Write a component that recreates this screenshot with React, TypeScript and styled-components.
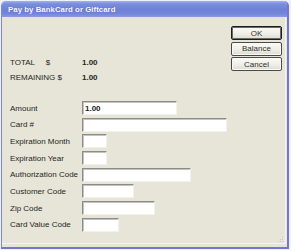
import React from "react";
import styled, { createGlobalStyle } from "styled-components";

const Global = createGlobalStyle`
  html, body { margin: 0; padding: 0; background: #eef0fa; }
  body { font-family: "Liberation Sans", Arial, sans-serif; }
  * { box-sizing: border-box; }
`;

const Window = styled.div`
  position: relative;
  margin: 1px 0 0 1px;
  width: 288px;
  height: 248px;
  display: flex;
  flex-direction: column;
  background: #e6e5d7;
  border-left: 1px solid #7c88d8;
  border-right: 2px solid #7378cc;
  border-bottom: 2px solid #7378cc;
  border-radius: 5px 5px 0 0;
  overflow: hidden;
`;

const TitleBar = styled.div`
  height: 16px;
  flex: none;
  display: flex;
  align-items: center;
  padding-left: 6px;
  background: linear-gradient(
    to bottom,
    #a2b0ec 0%,
    #7a8edc 18%,
    #6d82d6 55%,
    #7386da 80%,
    #8c98e6 100%
  );
  color: #fbfbff;
  font-size: 7.8px;
  font-weight: bold;
  text-shadow: 0 0 1px rgba(40, 50, 120, 0.6);
  letter-spacing: 0.05px;
`;

const Body = styled.div`
  flex: 1;
  display: flex;
  margin: 0 1px 3px 0;
  border-right: 1px solid #f4f4ee;
  border-bottom: 1px solid #f4f4ee;
`;

const Main = styled.div`
  flex: 1;
  padding: 38px 0 0 8px;
  display: flex;
  flex-direction: column;
`;

const Summary = styled.div`
  display: grid;
  grid-template-columns: 72px auto;
  grid-auto-rows: 15px;
  align-items: center;
  margin-bottom: 16px;
`;

const Text = styled.span<{ $bold?: boolean }>`
  font-size: 8px;
  color: #262626;
  font-weight: ${(p) => (p.$bold ? "bold" : "normal")};
  white-space: pre;
`;

const Form = styled.div`
  display: grid;
  grid-template-columns: 72px auto;
  grid-auto-rows: 14px;
  row-gap: 2.7px;
  align-items: center;
`;

const Field = styled.div<{ $w: number }>`
  width: ${(p) => p.$w}px;
  height: 14px;
  background: #ffffff;
  border-top: 1px solid #8c8c88;
  border-left: 1px solid #8c8c88;
  border-right: 1px solid #f2f2ea;
  border-bottom: 1px solid #f2f2ea;
  box-shadow: inset 1px 1px 0 #c4c3bc;
  display: flex;
  align-items: center;
  padding-left: 2px;
  font-size: 8px;
  font-weight: bold;
  color: #1a1a1a;
`;

const Side = styled.div`
  width: 55px;
  padding: 9px 3px 0 1px;
  display: flex;
  flex-direction: column;
  gap: 1.7px;
`;

const Button = styled.div<{ $default?: boolean }>`
  width: 51px;
  height: 14px;
  display: flex;
  align-items: center;
  justify-content: center;
  font-size: 8px;
  color: #303030;
  border-radius: 2px;
  border: 1px solid ${(p) => (p.$default ? "#1c1c1c" : "#4a4a4a")};
  box-shadow: ${(p) =>
    p.$default
      ? "inset 0 0 0 1px #6a6a6a"
      : "inset 0 0 0 1px #fbfbf6"};
  background: linear-gradient(to bottom, #fbfbf7 0%, #eeede5 60%, #dcdbd0 100%);
`;

const Grip = styled.svg`
  position: absolute;
  right: 3px;
  bottom: 4px;
`;

const fields: { label: string; w: number; value?: string }[] = [
  { label: "Amount", w: 95, value: "1.00" },
  { label: "Card #", w: 145 },
  { label: "Expiration Month", w: 25 },
  { label: "Expiration Year", w: 25 },
  { label: "Authorization Code", w: 109 },
  { label: "Customer Code", w: 52 },
  { label: "Zip Code", w: 73 },
  { label: "Card Value Code", w: 37 },
];

export default function App() {
  return (
    <>
      <Global />
      <Window>
        <TitleBar>Pay by BankCard or Giftcard</TitleBar>
        <Body>
          <Main>
            <Summary>
              <Text>{"TOTAL     $"}</Text>
              <Text $bold>1.00</Text>
              <Text>REMAINING $</Text>
              <Text $bold>1.00</Text>
            </Summary>
            <Form>
              {fields.map((f) => (
                <React.Fragment key={f.label}>
                  <Text>{f.label}</Text>
                  <Field $w={f.w}>{f.value ?? ""}</Field>
                </React.Fragment>
              ))}
            </Form>
          </Main>
          <Side>
            <Button $default>OK</Button>
            <Button>Balance</Button>
            <Button>Cancel</Button>
          </Side>
        </Body>
        <Grip width="7" height="7" viewBox="0 0 7 7">
          <g fill="#c9c8bc">
            <rect x="5" y="1" width="1" height="1" />
            <rect x="3" y="3" width="1" height="1" />
            <rect x="5" y="3" width="1" height="1" />
            <rect x="1" y="5" width="1" height="1" />
            <rect x="3" y="5" width="1" height="1" />
            <rect x="5" y="5" width="1" height="1" />
          </g>
        </Grip>
      </Window>
    </>
  );
}
